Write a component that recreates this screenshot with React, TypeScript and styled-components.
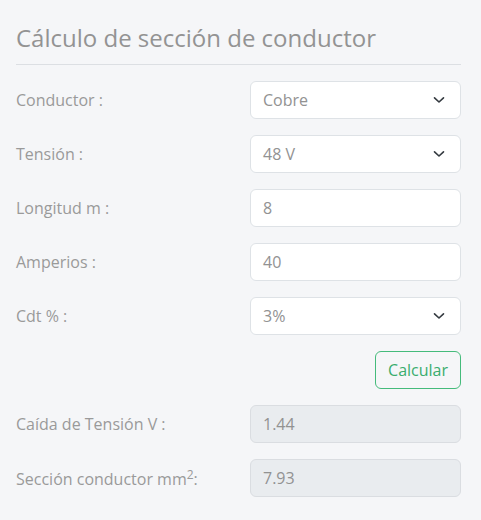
import React from "react";
import styled, { createGlobalStyle } from "styled-components";

const Global = createGlobalStyle`
  html, body { margin: 0; padding: 0; background: #f5f6f8; }
  body { font-family: "Open Sans", "Liberation Sans", sans-serif; color: #999999; }
  * { box-sizing: border-box; }
`;

const Page = styled.div`
  width: 481px;
  height: 520px;
  padding: 20px 20px 0 16px;
  background: #f5f6f8;
`;

const Title = styled.h1`
  margin: 0;
  font-size: 24px;
  font-weight: 400;
  line-height: 36px;
  color: #939393;
  padding-bottom: 8px;
  border-bottom: 1px solid #dcdfe3;
`;

const Form = styled.div`
  display: flex;
  flex-direction: column;
  gap: 16px;
  margin-top: 16px;
`;

const Row = styled.div`
  display: grid;
  grid-template-columns: 1fr 211px;
  align-items: center;
  height: 38px;
`;

const Label = styled.label`
  font-size: 16px;
  color: #9a9a9a;
`;

const Sup = styled.sup`
  font-size: 0.75em;
`;

const Field = styled.div<{ $disabled?: boolean }>`
  position: relative;
  height: 38px;
  border: 1px solid ${(p) => (p.$disabled ? "#dadde1" : "#dee2e6")};
  border-radius: 6px;
  background: ${(p) => (p.$disabled ? "#e9ecef" : "#ffffff")};
  display: flex;
  align-items: center;
  padding: 0 12px;
  font-size: 16px;
  color: #929292;
`;

const Chevron = styled.svg`
  position: absolute;
  right: 15px;
  top: 50%;
  transform: translateY(-50%);
`;

const Actions = styled.div`
  display: flex;
  justify-content: flex-end;
`;

const Button = styled.button`
  height: 38px;
  padding: 0 12px;
  border: 1px solid #45bb7b;
  border-radius: 6px;
  background: transparent;
  color: #3aad6e;
  font-family: "Open Sans", "Liberation Sans", sans-serif;
  font-size: 16px;
`;

const ChevronIcon = () => (
  <Chevron width="12" height="8" viewBox="0 0 12 8" fill="none">
    <path d="M1.5 1.8 L6 6 L10.5 1.8" stroke="#343a40" strokeWidth="1.6" strokeLinecap="round" strokeLinejoin="round" />
  </Chevron>
);

export default function App() {
  return (
    <>
      <Global />
      <Page>
        <Title>Cálculo de sección de conductor</Title>
        <Form>
          <Row>
            <Label>Conductor :</Label>
            <Field>Cobre<ChevronIcon /></Field>
          </Row>
          <Row>
            <Label>Tensión :</Label>
            <Field>48 V<ChevronIcon /></Field>
          </Row>
          <Row>
            <Label>Longitud m :</Label>
            <Field>8</Field>
          </Row>
          <Row>
            <Label>Amperios :</Label>
            <Field>40</Field>
          </Row>
          <Row>
            <Label>Cdt % :</Label>
            <Field>3%<ChevronIcon /></Field>
          </Row>
          <Actions>
            <Button>Calcular</Button>
          </Actions>
          <Row>
            <Label>Caída de Tensión V :</Label>
            <Field $disabled>1.44</Field>
          </Row>
          <Row>
            <Label>Sección conductor mm<Sup>2</Sup>:</Label>
            <Field $disabled>7.93</Field>
          </Row>
        </Form>
      </Page>
    </>
  );
}
